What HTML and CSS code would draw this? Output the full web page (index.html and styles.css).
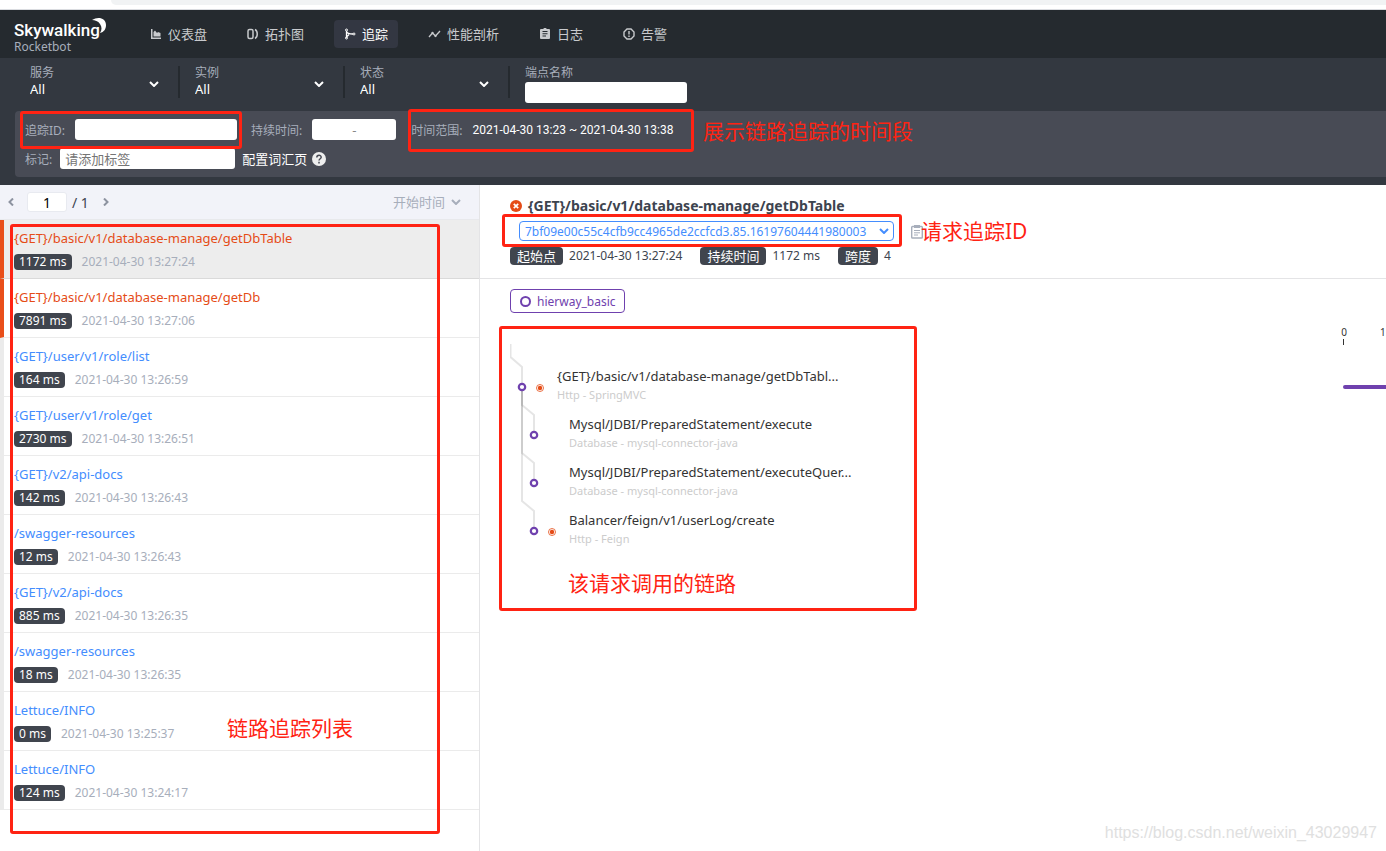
FILE: index.html
```html
<!DOCTYPE html>
<html lang="zh-CN">
<head>
<meta charset="utf-8">
<title>Skywalking Rocketbot - 追踪</title>
<link rel="stylesheet" href="styles.css">
</head>
<body>
<div class="page">
  <div class="browser-edge"><div class="address-bar"></div></div>

  <header class="header">
    <div class="brand">
      <svg class="brand-moon" width="16" height="20" viewBox="0 0 16 20" aria-hidden="true"><path d="M0 3C6-1 14 1 14 8c0 4-2 7-6 8 2-3 2-6 0-9C6 4 3 3 0 3z" fill="#fff"/></svg>
      <span class="brand-name">Skywalking</span>
      <span class="brand-sub">Rocketbot</span>
    </div>
    <nav class="nav">
      <a class="nav-item" href="#dashboard"><svg width="12" height="12" viewBox="0 0 12 12" aria-hidden="true"><path d="M1 1h1.500v8.500H11V11H1z M3.500 4l1.500-1.500L7 5l1-1 2.500 1v3.500h-7z" fill="currentColor"/></svg>仪表盘</a>
      <a class="nav-item" href="#topology"><svg width="12" height="12" viewBox="0 0 12 12" fill="none" stroke="currentColor" stroke-width="1.500" aria-hidden="true"><rect x="1" y="1.500" width="5" height="9" rx="1.500"/><path d="M8 1.500c3 1.500 3 7.500 0 9"/></svg>拓扑图</a>
      <a class="nav-item nav-item-active" href="#trace"><svg width="12" height="12" viewBox="0 0 12 12" fill="none" stroke="currentColor" aria-hidden="true"><circle cx="2.500" cy="2" r="1"/><circle cx="2.500" cy="10" r="1"/><circle cx="10" cy="6" r="1"/><path d="M2.500 3v6L5 6.500M2.500 3.500C3 5.500 5 6 9 6" stroke-width="1.300"/></svg>追踪</a>
      <a class="nav-item" href="#profile"><svg width="13" height="12" viewBox="0 0 13 12" fill="none" stroke="currentColor" stroke-width="1.300" aria-hidden="true"><path d="M1 9l3.500-4 3 3L12 3"/><circle cx="4.500" cy="5" r=".5"/><circle cx="7.500" cy="8" r=".5"/></svg>性能剖析</a>
      <a class="nav-item" href="#log"><svg width="12" height="12" viewBox="0 0 12 12" aria-hidden="true"><path fill-rule="evenodd" d="M2 1h2.500a1.500 1.500 0 0 1 3 0H10a1 1 0 0 1 1 1v8a1 1 0 0 1-1 1H2a1 1 0 0 1-1-1V2a1 1 0 0 1 1-1zm1.500 2v1h5V3zm0 2.300v1h5v-1zm0 2.300v1h3.500v-1z" fill="currentColor"/></svg>日志</a>
      <a class="nav-item" href="#alarm"><svg width="12" height="12" viewBox="0 0 12 12" fill="none" stroke="currentColor" stroke-width="1.400" aria-hidden="true"><path d="M4 1h4l3 3v4l-3 3H4L1 8V4z"/><path d="M6 3v3.500M6 7.500V9"/></svg>告警</a>
    </nav>
  </header>

  <section class="search">
    <div class="filters">
      <div class="filter"><label class="filter-label" for="service">服务</label><select class="filter-select" id="service"><option>All</option></select></div>
      <div class="filter"><label class="filter-label" for="instance">实例</label><select class="filter-select" id="instance"><option>All</option></select></div>
      <div class="filter"><label class="filter-label" for="status">状态</label><select class="filter-select" id="status"><option>All</option></select></div>
      <div class="filter filter-endpoint"><label class="filter-label" for="endpoint">端点名称</label><input class="box endpoint-box" id="endpoint" type="text"></div>
    </div>
    <div class="conditions">
      <div class="condition-row">
        <label class="condition-label" for="trace-id">追踪ID:</label><input class="box trace-box" id="trace-id" type="text">
        <span class="condition-label duration-label" id="duration-label">持续时间:</span><input class="box duration-box" type="text" value="-" aria-labelledby="duration-label">
        <span class="condition-label range-label">时间范围:</span><span class="range-value">2021-04-30 13:23 ~ 2021-04-30 13:38</span>
      </div>
      <div class="condition-row tag-row">
        <label class="condition-label" for="tags">标记:</label><input class="box tag-box" id="tags" type="text" placeholder="请添加标签">
        <a class="vocabulary" href="#vocabulary">配置词汇页 <svg width="14" height="14" viewBox="0 0 14 14" aria-hidden="true"><circle cx="7" cy="7" r="7" fill="#eee"/><path d="M4.800 5.500C4.800 2.500 9.200 2.600 9.200 5.200 9.200 6.800 7 6.700 7 8.600M7 9.800v1.600" fill="none" stroke="#484b55" stroke-width="1.500"/></svg></a>
      </div>
    </div>
  </section>

  <main class="content">
    <aside class="sidebar">
      <div class="pager">
        <button class="pager-step" type="button" aria-label="上一页"><svg width="6" height="8" viewBox="0 0 6 8" aria-hidden="true"><path d="M5 0.500L1.500 4 5 7.500"/></svg></button>
        <input class="pager-input" type="text" value="1" aria-label="页码">
        <span class="pager-total">/ 1</span>
        <button class="pager-step" type="button" aria-label="下一页"><svg width="6" height="8" viewBox="0 0 6 8" aria-hidden="true"><path d="M1 0.500L4.500 4 1 7.500"/></svg></button>
        <select class="sort" aria-label="排序"><option>开始时间</option></select>
      </div>
      <ul class="traces">
        <li class="trace trace-error trace-selected"><a class="trace-name" href="#t1">{GET}/basic/v1/database-manage/getDbTable</a><div class="trace-meta"><span class="tag">1172 ms</span><time>2021-04-30 13:27:24</time></div></li>
        <li class="trace trace-error"><a class="trace-name" href="#t2">{GET}/basic/v1/database-manage/getDb</a><div class="trace-meta"><span class="tag">7891 ms</span><time>2021-04-30 13:27:06</time></div></li>
        <li class="trace"><a class="trace-name" href="#t3">{GET}/user/v1/role/list</a><div class="trace-meta"><span class="tag">164 ms</span><time>2021-04-30 13:26:59</time></div></li>
        <li class="trace"><a class="trace-name" href="#t4">{GET}/user/v1/role/get</a><div class="trace-meta"><span class="tag">2730 ms</span><time>2021-04-30 13:26:51</time></div></li>
        <li class="trace"><a class="trace-name" href="#t5">{GET}/v2/api-docs</a><div class="trace-meta"><span class="tag">142 ms</span><time>2021-04-30 13:26:43</time></div></li>
        <li class="trace"><a class="trace-name" href="#t6">/swagger-resources</a><div class="trace-meta"><span class="tag">12 ms</span><time>2021-04-30 13:26:43</time></div></li>
        <li class="trace"><a class="trace-name" href="#t7">{GET}/v2/api-docs</a><div class="trace-meta"><span class="tag">885 ms</span><time>2021-04-30 13:26:35</time></div></li>
        <li class="trace"><a class="trace-name" href="#t8">/swagger-resources</a><div class="trace-meta"><span class="tag">18 ms</span><time>2021-04-30 13:26:35</time></div></li>
        <li class="trace"><a class="trace-name" href="#t9">Lettuce/INFO</a><div class="trace-meta"><span class="tag">0 ms</span><time>2021-04-30 13:25:37</time></div></li>
        <li class="trace"><a class="trace-name" href="#t10">Lettuce/INFO</a><div class="trace-meta"><span class="tag">124 ms</span><time>2021-04-30 13:24:17</time></div></li>
      </ul>
    </aside>

    <section class="detail">
      <div class="detail-head">
        <h1 class="detail-title"><svg width="12" height="12" viewBox="0 0 12 12" aria-hidden="true"><circle cx="6" cy="6" r="6" fill="#e54c17"/><path d="M3.800 3.800l4.400 4.400M8.200 3.800L3.800 8.200" stroke="#fff" stroke-width="1.700"/></svg>{GET}/basic/v1/database-manage/getDbTable</h1>
        <div class="detail-id">
          <select class="id-select" aria-label="追踪ID"><option>7bf09e00c55c4cfb9cc4965de2ccfcd3.85.16197604441980003</option></select>
          <button class="copy" type="button" aria-label="复制"><svg width="12" height="15" viewBox="0 0 12 15" aria-hidden="true"><path d="M1.500 2.500h9a.8.8 0 0 1 .8.800v9.900a.8.800 0 0 1-.8.800h-9a.8.800 0 0 1-.8-.8V3.300a.8.800 0 0 1 .8-.8z" fill="none" stroke="#a7aebb" stroke-width="1.400"/><path d="M3 1h6v3H3z" fill="#a7aebb"/><path d="M3 6.500h6M3 8.800h6M3 11h4" stroke="#a7aebb"/></svg></button>
        </div>
        <div class="facts">
          <span class="tag fact-tag">起始点</span><span class="fact">2021-04-30 13:27:24</span>
          <span class="tag fact-tag">持续时间</span><span class="fact">1172 ms</span>
          <span class="tag fact-tag">跨度</span><span class="fact">4</span>
        </div>
      </div>
      <div class="detail-body">
        <span class="service-chip"><i class="ring"></i>hierway_basic</span>
        <div class="chart">
          <ul class="spans">
            <li class="span-row span-root"><span class="span-name">{GET}/basic/v1/database-manage/getDbTabl...</span><span class="span-kind">Http - SpringMVC</span></li>
            <li class="span-row"><span class="span-name">Mysql/JDBI/PreparedStatement/execute</span><span class="span-kind">Database - mysql-connector-java</span></li>
            <li class="span-row"><span class="span-name">Mysql/JDBI/PreparedStatement/executeQuer...</span><span class="span-kind">Database - mysql-connector-java</span></li>
            <li class="span-row"><span class="span-name">Balancer/feign/v1/userLog/create</span><span class="span-kind">Http - Feign</span></li>
          </ul>
          <svg class="links" width="50" height="210" viewBox="0 0 50 210" fill="none" aria-hidden="true">
            <g stroke="#000" stroke-opacity=".1" stroke-width="2">
              <path d="M.5 12v13L12 35v20"/>
              <path d="M12 57v16l12 10v20"/>
              <path d="M12 57v64l12 10v20"/>
              <path d="M12 57v112l12 10v20"/>
            </g>
            <g stroke="#6f41ae" stroke-width="2.200" fill="#fff"><circle cx="12" cy="55" r="3.200"/><circle cx="24" cy="103" r="3.200"/><circle cx="24" cy="151" r="3.200"/><circle cx="24" cy="199" r="3.200"/></g>
            <g stroke="#e54c17" stroke-width=".8"><circle cx="30" cy="56" r="3.500"/><circle cx="42" cy="200" r="3.500"/></g>
            <g fill="#e54c17"><circle cx="30" cy="56" r="2.200"/><circle cx="42" cy="200" r="2.200"/></g>
          </svg>
          <svg class="timeline" width="46" height="70" viewBox="0 0 46 70" aria-hidden="true">
            <text x="4" y="9" text-anchor="middle">0</text><text x="40" y="9">1</text>
            <path d="M3.500 12v6" stroke="#333"/><rect x="3" y="58" width="80" height="4" rx="2" fill="#6f41ae"/>
          </svg>
        </div>
      </div>
    </section>
  </main>

  <div class="mark mark-id"></div>
  <div class="mark mark-range"></div>
  <div class="mark mark-list"></div>
  <div class="mark mark-trace"></div>
  <div class="mark mark-tree"></div>
  <span class="note note-range">展示链路追踪的时间段</span>
  <span class="note note-list">链路追踪列表</span>
  <span class="note note-trace">请求追踪ID</span>
  <span class="note note-tree">该请求调用的链路</span>
  <span class="watermark">https://blog.csdn.net/weixin_43029947</span>
</div>
</body>
</html>
```
FILE: styles.css
```css
* { box-sizing: border-box; }
body { margin: 0; font-family: "Noto Sans", "Noto Sans CJK SC", sans-serif; font-size: 13px; color: #3d444f; background: #fff; }
button, input, select { font: inherit; color: inherit; margin: 0; }
a { text-decoration: none; }
ul { list-style: none; margin: 0; padding: 0; }

.page { position: relative; display: flex; flex-direction: column; min-height: 100vh; overflow: hidden; }
.browser-edge { height: 10px; border-bottom: 1px solid #dadce0; padding-left: 111px; }
.address-bar { height: 5px; background: #f1f3f4; border-bottom-left-radius: 10px; }

.header { display: flex; align-items: center; height: 48px; background: #252a2f; }
.brand { position: relative; width: 126px; margin-left: 14px; padding-top: 8px; display: flex; flex-direction: column; }
.brand-name { font: 500 17px/18px Roboto, sans-serif; color: #fff; }
.brand-sub { font-size: 12px; line-height: 16px; color: #a7aebb; }
.brand-moon { position: absolute; left: 78px; top: 4px; }
.nav { display: flex; gap: 20px; }
.nav-item { display: flex; align-items: center; gap: 6px; height: 28px; padding: 0 10px; border-radius: 4px; font-size: 13px; line-height: 20px; color: #c8cacd; }
.nav-item-active { background: #333742; color: #fff; }

.search { background: #333840; padding: 0 0 8px 15px; }
.filters { display: flex; height: 53px; padding-top: 8px; }
.filter { display: flex; flex-direction: column; width: 165px; height: 32px; padding: 0 15px; border-right: 2px solid #252a2f; }
.filter-label { font-size: 12px; line-height: 14px; color: #a7aebb; }
.filter-select { appearance: none; border: 0; padding: 0; height: 18px; font-size: 13px; line-height: 18px; color: #fff; background: url("data:image/svg+xml,%3Csvg xmlns='http://www.w3.org/2000/svg' width='10' height='6'%3E%3Cpath d='M1 1l4 4 4-4' fill='none' stroke='%23fff' stroke-width='2'/%3E%3C/svg%3E") no-repeat right 4px top 1px; }
.filter-endpoint { width: 194px; border: 0; height: auto; }
.box { border: 0; border-radius: 3px; background: #fff; height: 21px; padding: 0 5px; font-size: 13px; color: #333; }
.endpoint-box { width: 162px; margin-top: 2px; flex: none; }
.conditions { background: #484b55; border-radius: 4px 0 0 4px; height: 66px; padding: 8px 10px; }
.condition-row { display: flex; align-items: center; height: 21px; }
.tag-row { margin-top: 8px; }
.condition-label { font-size: 12px; color: #a7aebb; white-space: nowrap; }
.trace-box { width: 162px; margin-left: 10px; }
.duration-label { margin-left: 14px; }
.duration-box { width: 84px; margin-left: 10px; text-align: center; color: #888; }
.range-label { margin-left: 15px; }
.range-value { margin-left: 10px; font-family: Roboto, sans-serif; font-size: 12px; color: #fff; }
.tag-box { width: 175px; margin-left: 8px; }
.vocabulary { display: flex; align-items: center; gap: 5px; margin-left: 7px; color: #fff; }

.content { display: flex; flex: 1; }
.sidebar { width: 480px; flex: none; border-right: 1px solid #e4e4e6; }
.pager { display: flex; align-items: center; height: 35px; background: #f2f3f9; border-bottom: 1px solid #e8e9ec; padding: 0 18px 0 8px; }
.pager-step { border: 0; background: none; padding: 0; display: flex; }
.pager-step path { fill: none; stroke: #8d93a0; stroke-width: 2; }
.pager-input { width: 40px; height: 20px; margin: 0 5px 0 13px; border: 1px solid #e8eaf0; border-radius: 3px; text-align: center; background: #fff; color: #000; font-size: 14px; padding: 0; }
.pager-total { margin-right: 14px; font-size: 14px; }
.sort { appearance: none; border: 0; margin-left: auto; padding: 0 15px 0 0; color: #a7aebb; background: url("data:image/svg+xml,%3Csvg xmlns='http://www.w3.org/2000/svg' width='10' height='6'%3E%3Cpath d='M1 1l4 4 4-4' fill='none' stroke='%23a7aebb' stroke-width='2'/%3E%3C/svg%3E") no-repeat right center; }
.trace { height: 59px; border-left: 4px solid #ebebeb; border-bottom: 1px solid #ebebeb; padding: 9px 10px; }
.trace-name { display: block; line-height: 18px; font-size: 13px; color: #448dfe; }
.trace-error { border-left-color: #e94f1a; }
.trace-error .trace-name { color: #e54c17; }
.trace-selected { background: #ededed; border-bottom-color: #dadada; }
.trace-meta { display: flex; align-items: center; gap: 10px; margin-top: 7px; font-size: 12px; line-height: 16px; color: #a7aebb; }
.tag { background: #40454e; border-radius: 4px; padding: 0 5px; color: #fff; }

.detail { flex: 1; min-width: 0; }
.detail-head { height: 94px; padding: 12px 30px 0; border-bottom: 1px solid #e4e4e6; }
.detail-title { display: flex; align-items: center; gap: 6px; margin: 0; font-size: 14px; line-height: 18px; }
.detail-id { display: flex; align-items: center; gap: 17px; margin: 6px 0 6px 9px; }
.id-select { appearance: none; width: 375px; height: 20px; border: 1px solid #448dfe; border-radius: 4px; padding: 0 16px 0 5px; font-size: 12px; color: #448dfe; background: url("data:image/svg+xml,%3Csvg xmlns='http://www.w3.org/2000/svg' width='10' height='6'%3E%3Cpath d='M1 1l4 4 4-4' fill='none' stroke='%23448dfe' stroke-width='2'/%3E%3C/svg%3E") no-repeat right 4px center; }
.copy { border: 0; background: none; padding: 0; display: flex; }
.facts { display: flex; align-items: center; font-size: 12px; line-height: 18px; }
.fact-tag { padding: 0 7px; font-size: 13px; }
.fact { margin: 0 18px 0 6px; }
.detail-body { padding: 10px 0 0 30px; }
.service-chip { display: inline-flex; align-items: center; gap: 6px; height: 24px; border: 1px solid #6f41ae; border-radius: 4px; padding: 0 8px 0 9px; font-size: 12px; color: #6f41ae; }
.ring { width: 11px; height: 11px; border: 2px solid #6f41ae; border-radius: 50%; }
.chart { position: relative; display: flex; justify-content: space-between; margin-top: 14px; overflow: hidden; }
.links { position: absolute; left: 0; top: 5px; }
.spans { padding-top: 39px; }
.span-row { display: flex; flex-direction: column; height: 48px; padding-left: 59px; }
.span-root { padding-left: 47px; }
.span-name { font-size: 13px; line-height: 20px; color: #333; }
.span-kind { font-size: 11px; line-height: 18px; color: #ccc; }
.timeline { flex: none; font-size: 10px; fill: #333; }

/* Annotations drawn over the interface */
.mark { position: absolute; border: 3px solid #ff2313; border-radius: 3px; pointer-events: none; }
.mark-id { left: 20px; top: 111px; width: 222px; height: 38px; }
.mark-range { left: 408px; top: 109px; width: 286px; height: 43px; }
.mark-list { left: 10px; top: 224px; width: 430px; height: 610px; }
.mark-trace { left: 502px; top: 214px; width: 400px; height: 33px; }
.mark-tree { left: 499px; top: 326px; width: 418px; height: 285px; }
.note { position: absolute; font-size: 21px; line-height: 28px; color: #ff2313; white-space: nowrap; }
.note-range { left: 703px; top: 117px; }
.note-list { left: 227px; top: 714px; }
.note-trace { left: 921px; top: 217px; }
.note-tree { left: 568px; top: 569px; }
.watermark { position: absolute; right: 9px; bottom: 8px; font: 16px/20px "Liberation Sans", sans-serif; color: #e0e0e0; }
```
